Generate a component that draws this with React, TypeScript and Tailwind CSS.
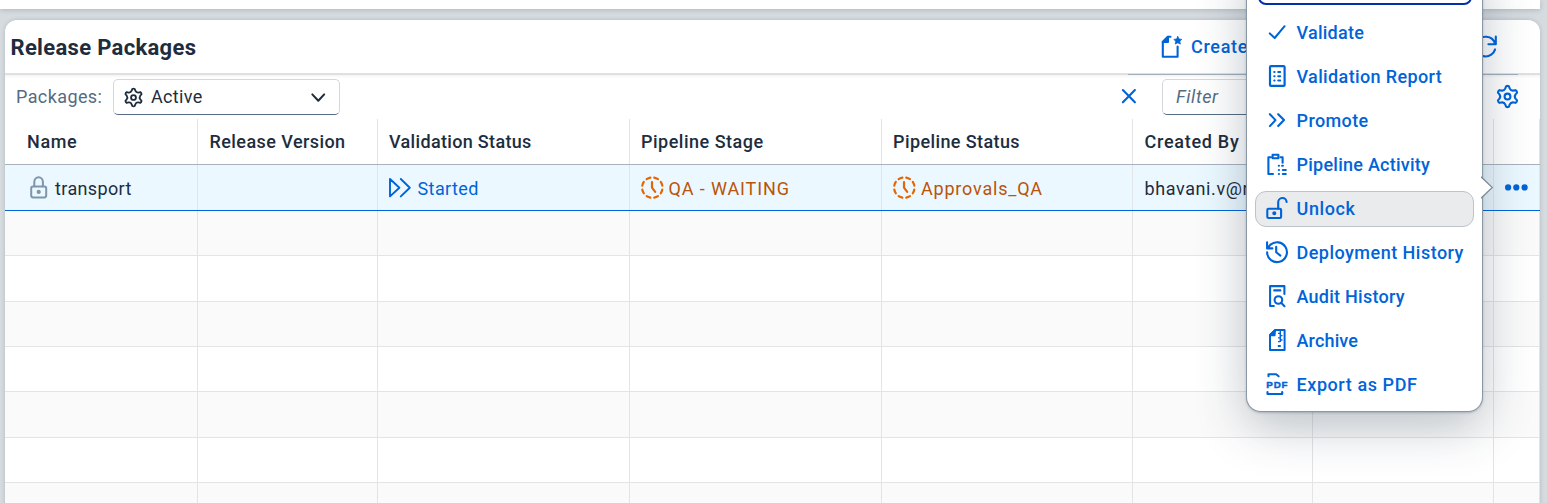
import React, { ReactNode } from "react";

/* ---------- icons ---------- */

function Svg({ w = 24, h = 24, className = "", sw = 2, children }: { w?: number; h?: number; className?: string; sw?: number; children: ReactNode }) {
  return (
    <svg width={w} height={h} viewBox={`0 0 ${w} ${h}`} fill="none" stroke="currentColor" strokeWidth={sw} strokeLinecap="round" strokeLinejoin="round" className={`shrink-0 overflow-visible ${className}`} aria-hidden="true">
      {children}
    </svg>
  );
}

const ValidateIcon = () => (
  <Svg><path d="M4.8 12.4l4.9 4.6L19.6 5.2" /></Svg>
);
const ReportIcon = () => (
  <Svg sw={2.2}>
    <rect x="5" y="1.1" width="14.6" height="19.8" rx="1" />
    <path d="M9.2 7h.4M9.2 11.2h.4M9.2 15.4h.4M13.2 7H15.2M13.2 11.2H15.2M13.2 15.4H15.2" strokeWidth="2" />
  </Svg>
);
const PromoteIcon = () => (
  <Svg sw={2.1}><path d="M4.9 5.2l5.6 5.9-5.6 6M13.2 5.2l5.8 5.9-5.8 6" /></Svg>
);
const ActivityIcon = () => (
  <Svg sw={2.1}>
    <path d="M6 4.2H3.4V21H8M15.5 4.2H17.6V9.8" />
    <path d="M7.6 1.8h5.8v3.4H7.6z" />
    <path d="M13.8 12.8h.2M13.8 17h.2M13.8 21h.2M17.1 12.8h.8M17.8 17h3M17.8 21h3" />
  </Svg>
);
const UnlockIcon = () => (
  <Svg sw={2.1}>
    <rect x="2.3" y="11.7" width="13.8" height="9.3" rx="1.2" />
    <path d="M13.2 11.5V5.4a4.2 4.2 0 0 1 8.4-.4" />
    <circle cx="9.3" cy="16.3" r="1" fill="currentColor" />
  </Svg>
);
const HistoryIcon = () => (
  <Svg sw={2.1}>
    <path d="M2.1 11.3a9.9 9.9 0 1 0 3-7.2L2.4 7.3M2.1 1.2V7.4H7.4" />
    <path d="M11.2 5.8V11.2L15.4 14.6" />
  </Svg>
);
const AuditIcon = () => (
  <Svg sw={2.1}>
    <path d="M8.8 21H5.1V1.1H19.4V9M9.2 5.4h6.2" />
    <circle cx="13.4" cy="15" r="3.8" />
    <path d="M16.2 17.8l3.3 3.4" />
  </Svg>
);
const ArchiveIcon = () => (
  <Svg>
    <path d="M10 1.1H19.6V21H5V6z" />
    <path d="M10 1.1L5 6.2H9.6z" fill="currentColor" />
    <path d="M15.3 2V13" strokeLinecap="butt" strokeWidth="1.5" />
    <path d="M13 4.4h2M15.5 6.6h2M13 8.8h2M15.5 11h2M13 12.6h2" strokeLinecap="butt" strokeWidth="1.3" />
    <path d="M12.8 17h3" strokeLinecap="butt" />
  </Svg>
);
const PdfIcon = () => (
  <Svg sw={2.1}>
    <path d="M3.5 3.2V1.3H11.2L13.6 3.3M2.5 19V21H17.2V19" />
    <text x="12.2" y="14.7" textAnchor="middle" textLength="22" lengthAdjust="spacing" fontSize="9.8" fontWeight="700" fill="currentColor" stroke="currentColor" strokeWidth="0.45" className="font-['Liberation_Sans',sans-serif]">PDF</text>
  </Svg>
);
const CreateIcon = () => (
  <Svg w={22} h={24} sw={2.1}>
    <path d="M9.5 1.8H7L1.8 7V21.8H16.6V11.5" />
    <path d="M7 1.8V7H1.8z" fill="currentColor" />
    <path d="M16.8 1.5l1.2 2.5 2.8.4-2 1.9.5 2.8-2.5-1.3-2.5 1.3.5-2.8-2-1.9 2.8-.4z" fill="currentColor" strokeWidth="0.8" />
  </Svg>
);
const RefreshIcon = () => (
  <Svg sw={2.1}>
    <path d="M20.2 9.2A9.9 9.9 0 0 0 1.6 7.6M.8 12.8a9.9 9.9 0 0 0 19.3 1.6M20.8 1.6V9.2H13.4" />
  </Svg>
);
const LockIcon = () => (
  <Svg w={18} h={24} className="text-[#7f95ab]">
    <rect x="1.2" y="10.4" width="15" height="11" rx="1.8" />
    <path d="M4.3 10.2V6a4.3 4.8 0 0 1 8.6 0v4.2" />
    <circle cx="8.7" cy="15.9" r="1.1" fill="currentColor" />
  </Svg>
);
const StartedIcon = () => (
  <Svg w={24} h={24} className="text-[#0064d9]">
    <path d="M2 3v17.4l9.4-8.7zM12.8 3l9 8.7-9 8.7" strokeWidth="1.9" />
  </Svg>
);
const WaitingIcon = () => (
  <Svg w={24} h={24} className="text-[#e76500]" sw={2.2}>
    <circle cx="12.3" cy="11.6" r="10.2" pathLength="80" strokeDasharray="5 5" strokeDashoffset="-2.5" />
    <path d="M12 6V11.6L15.2 15.8" />
  </Svg>
);

const gearPoint = (r: number, deg: number) => {
  const a = (deg * Math.PI) / 180;
  return `${(12 + r * Math.sin(a)).toFixed(2)} ${(12 - r * Math.cos(a)).toFixed(2)}`;
};
const gearPath =
  [0, 60, 120, 180, 240, 300]
    .map((a, i) => `${i ? "L" : "M"}${gearPoint(9.9, a - 8)}Q${gearPoint(10.6, a)} ${gearPoint(9.9, a + 8)}L${gearPoint(8, a + 15)}Q${gearPoint(6.2, a + 30)} ${gearPoint(8, a + 45)}`)
    .join("") + "Z";

function GearIcon({ size, sw }: { size: number; sw: number }) {
  return (
    <svg width={size} height={size} viewBox="0 0 24 24" fill="none" stroke="currentColor" strokeWidth={sw} strokeLinejoin="round" className="shrink-0" aria-hidden="true">
      <path d={gearPath} />
      <circle cx="12" cy="12" r="2.8" />
    </svg>
  );
}

/* ---------- data ---------- */

const columns = [
  { label: "Name", className: "pl-[22px] tracking-[0.65px]" },
  { label: "Release Version", className: "pl-[11.5px] tracking-[0.43px]" },
  { label: "Validation Status", className: "pl-[11px] tracking-[0.33px]" },
  { label: "Pipeline Stage", className: "pl-[11px] tracking-[0.5px]" },
  { label: "Pipeline Status", className: "pl-[11px] tracking-[0.4px]" },
  { label: "Created By", className: "pl-[11.5px] tracking-[0.72px]" },
  { label: "", className: "" },
  { label: "", className: "" },
];

const emptyRows = ["h-[45px]", "h-[46px]", "h-[45px]", "h-[45px]", "h-[46px]", "h-[45px]", "h-[45px]"];

const actions = [
  { label: "Validate", icon: <ValidateIcon />, tracking: "tracking-[0.25px]" },
  { label: "Validation Report", icon: <ReportIcon />, tracking: "tracking-[0.37px]" },
  { label: "Promote", icon: <PromoteIcon />, tracking: "tracking-[0.4px]" },
  { label: "Pipeline Activity", icon: <ActivityIcon />, tracking: "tracking-[0.25px]" },
  { label: "Unlock", icon: <UnlockIcon />, tracking: "tracking-[0.6px]", active: true },
  { label: "Deployment History", icon: <HistoryIcon />, tracking: "tracking-[0.48px]" },
  { label: "Audit History", icon: <AuditIcon />, tracking: "tracking-[0.25px]" },
  { label: "Archive", icon: <ArchiveIcon />, tracking: "tracking-[0.15px]" },
  { label: "Export as PDF", icon: <PdfIcon />, tracking: "tracking-[0.58px]" },
];

/* ---------- pieces ---------- */

const grid = "grid grid-cols-[193px_180px_252px_252px_251px_180px_181px_46px]";
const cell = "flex items-center overflow-hidden whitespace-nowrap border-r border-[#e2e4e6]";

function Toolbar() {
  return (
    <div className="flex h-[44px] items-start pl-[11px] pr-[20px] pt-[4px] shadow-[inset_0_3px_3px_-2px_rgba(34,53,72,0.08)]">
      <span className="w-[97px] whitespace-nowrap leading-[36px] tracking-[0.4px] text-[#556b82]">Packages:</span>
      <div className="flex h-[36px] w-[227px] items-center rounded-[5px] border border-[#d3d8dd] border-b-[#556b82] bg-white pl-[9px] pr-[13px] text-[#1d2d3e]">
        <GearIcon size={21} sw={2.1} />
        <span className="ml-[7px] flex-1 tracking-[0.35px]">Active</span>
        <Svg w={16} h={16} className="translate-y-px"><path d="M2.3 4.4l6 6.4 5.9-6.4" /></Svg>
      </div>
      <div className="flex-1" />
      <Svg w={16} h={36} sw={2.1} className="mr-[25px] text-[#0064d9]"><path d="M1.9 11l12 12.3M13.9 11L1.9 23.3" /></Svg>
      <div className="h-[36px] w-[317px] rounded-[5px] border border-[#d3d8dd] border-b-[#556b82] bg-white pl-[13px] italic leading-[34px] tracking-[0.6px] text-[#556b82]">Filter</div>
      <span className="ml-[16px] mt-[5px] text-[#0064d9]"><GearIcon size={25} sw={2} /></span>
    </div>
  );
}

function Table() {
  return (
    <div>
      <div className={`${grid} h-[46px] border-b border-[#a8b2bd]`}>
        {columns.map((c, i) => (
          <div key={i} className={`${cell} font-[550] ${c.className}`}>{c.label}</div>
        ))}
      </div>
      <div className={`${grid} h-[46px] border-b border-[#0064d9] bg-[#ebf8ff]`}>
        <div className={`${cell} pl-[25px]`}><LockIcon /><span className="ml-[7px] mt-[2px] tracking-[0.37px]">transport</span></div>
        <div className={cell} />
        <div className={`${cell} pl-[10px]`}><StartedIcon /><span className="ml-[5.5px] mt-[2px] tracking-[0.4px] text-[#0064d9]">Started</span></div>
        <div className={`${cell} pl-[10px]`}><WaitingIcon /><span className="ml-[4.5px] mt-[2px] tracking-[0.88px] text-[#b95409]">QA - WAITING</span></div>
        <div className={`${cell} pl-[10px]`}><WaitingIcon /><span className="ml-[5px] mt-[2px] tracking-[0.8px] text-[#b95409]">Approvals_QA</span></div>
        <div className={`${cell} pl-[11.5px]`}><span className="mt-[2px] tracking-[0.6px]">bhavani.v@r</span></div>
        <div className={cell} />
        <div className={`${cell} pl-[10px] text-[#0064d9]`}>
          <svg width="26" height="8" viewBox="0 0 26 8" fill="currentColor" aria-label="More actions">
            <circle cx="4.1" cy="3.4" r="3.1" /><circle cx="12.3" cy="3.4" r="3.1" /><circle cx="20.6" cy="3.4" r="3.1" />
          </svg>
        </div>
      </div>
      {emptyRows.map((h, i) => (
        <div key={i} className={`${grid} ${h} border-b border-[#e2e4e6] ${i % 2 ? "bg-white" : "bg-[#fafafa]"}`}>
          {columns.map((_, j) => <div key={j} className={cell} />)}
        </div>
      ))}
    </div>
  );
}

function ActionMenu() {
  return (
    <div className="absolute -top-[38px] left-[1247px] w-[235px] rounded-[14px] bg-white px-[8px] pb-[8px] pt-[7px] text-[#0064d9] shadow-[0_0_0_1px_#8a97a5,0_1px_3px_0_rgba(34,53,72,0.5),0_14px_50px_0_rgba(34,53,72,0.3)]">
      <div className="ml-[3px] mr-[2px] h-[36px] rounded-[8px] border-2 border-[#0032a5]" />
      <div className="mt-[10px] flex flex-col gap-[8px]">
        {actions.map((a) => (
          <div key={a.label} className={`flex h-[36px] items-center gap-[7.5px] whitespace-nowrap rounded-[11px] border pl-[9px] font-[550] ${a.tracking} ${a.active ? "border-[#bcc3ca] bg-[#eaebec]" : "border-transparent"}`}>
            {a.icon}
            <span>{a.label}</span>
          </div>
        ))}
      </div>
      <svg className="absolute left-[234px] top-[214px]" width="13" height="23" viewBox="0 0 13 23" fill="#fff" aria-hidden="true">
        <path d="M0 0.8L11.3 11.5 0 22.2" stroke="#7b8a99" strokeWidth="1.2" />
      </svg>
    </div>
  );
}

export default function App() {
  return (
    <div className="relative h-[503px] w-[1547px] overflow-hidden bg-[#d6dbdf] font-['Roboto',sans-serif] text-[18px] leading-[24px] text-[#1d2d3e]">
      <div className="h-[9px] w-[1540px] bg-white shadow-[0_1px_5px_rgba(34,53,72,0.22)]" />
      <div className="ml-[5px] mt-[11px] h-[500px] w-[1535px] overflow-hidden rounded-t-[12px] bg-white shadow-[0_0_4px_rgba(34,53,72,0.2)]">
        <div className="flex h-[55px] items-center border-b-2 border-[#e0e0e0] pl-[5.5px] pr-[41px]">
          <h1 className="mt-[2px] flex-1 text-[22px] font-bold tracking-[0.32px]">Release Packages</h1>
          <div className="flex w-[314px] items-center gap-[8px] font-[550] tracking-[0.7px] text-[#0064d9]">
            <CreateIcon />
            <span className="mt-px">Create</span>
          </div>
          <span className="text-[#0064d9]"><RefreshIcon /></span>
        </div>
        <div className="-mt-px ml-[1123px] h-px w-[390px] bg-[#a3afbb]" />
        <Toolbar />
        <Table />
      </div>
      <ActionMenu />
    </div>
  );
}
